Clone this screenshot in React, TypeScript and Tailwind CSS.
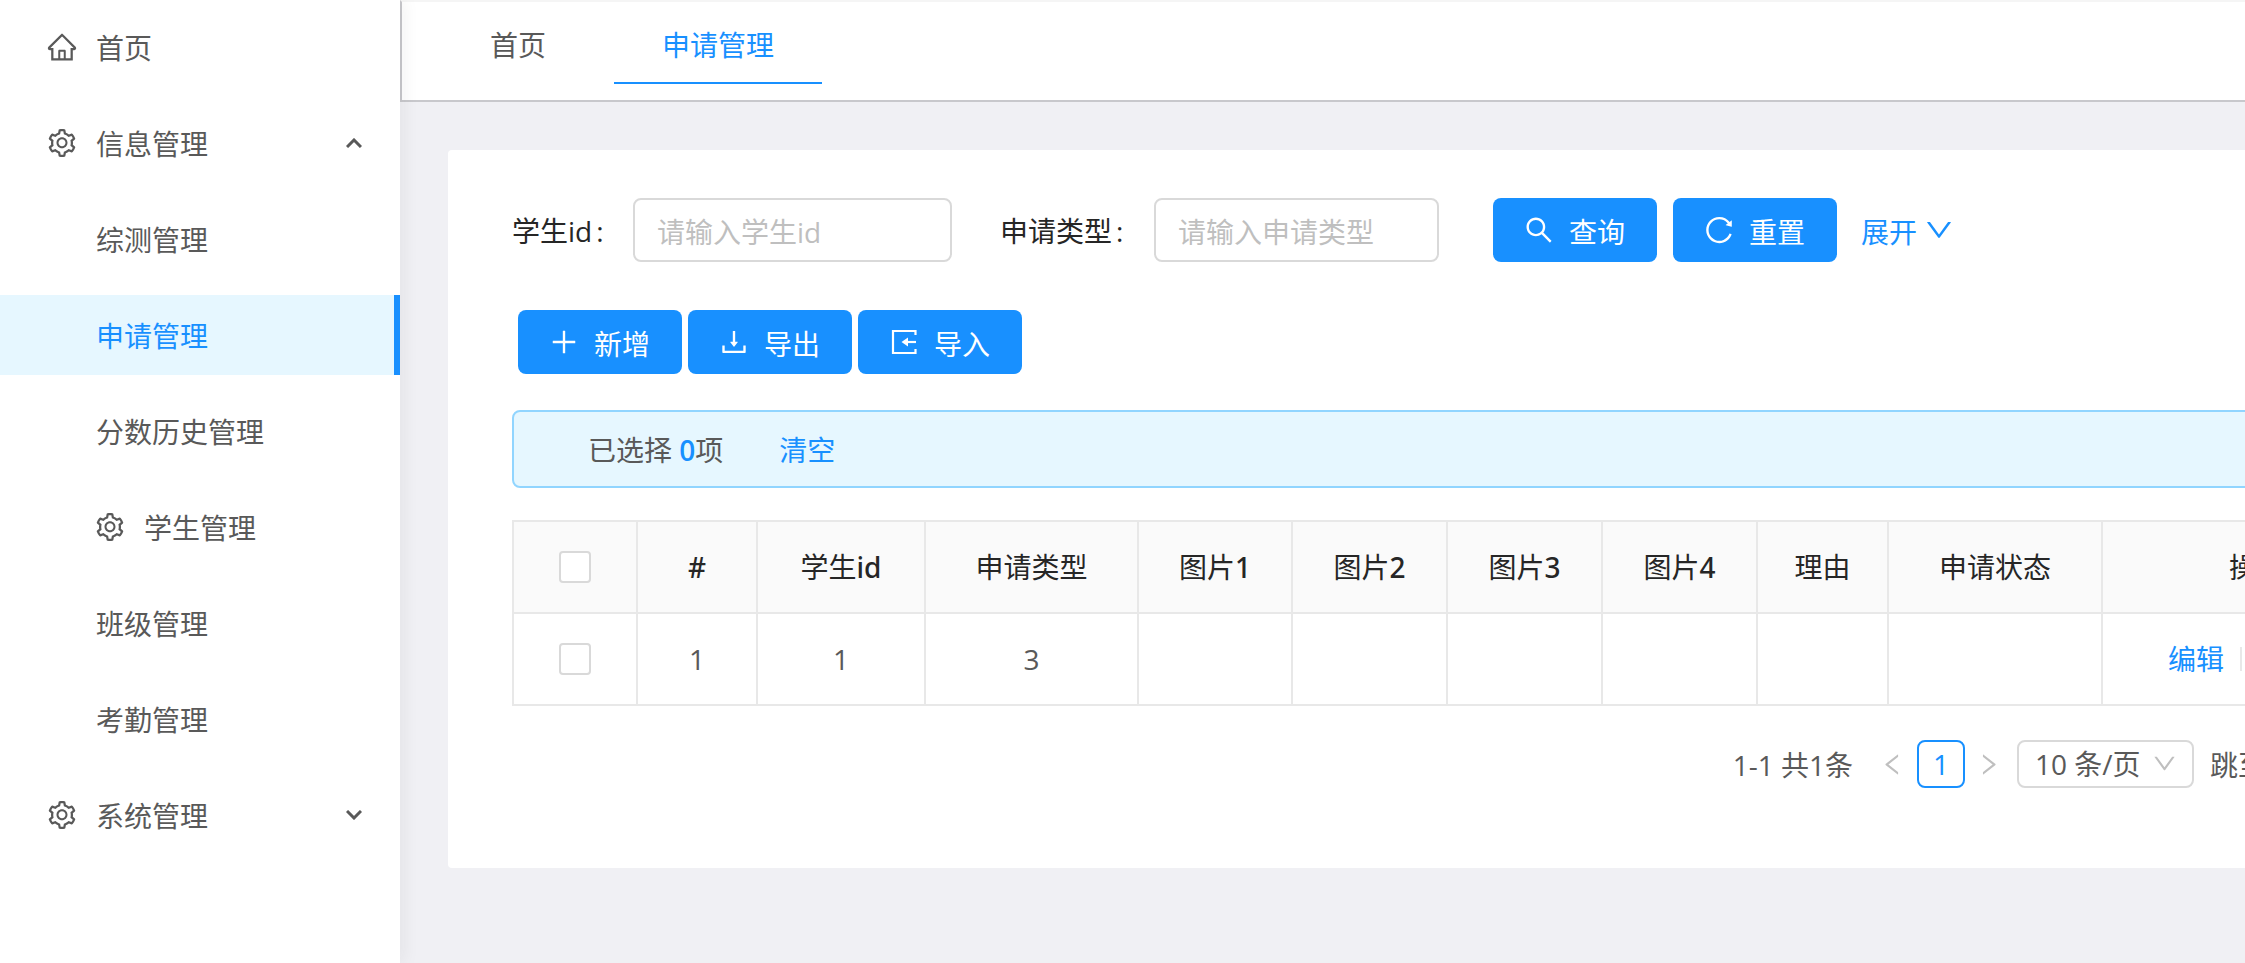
import React from 'react';
import {
  AiOutlineDown,
  AiOutlineDownload,
  AiOutlineHome,
  AiOutlineLeft,
  AiOutlinePlus,
  AiOutlineReload,
  AiOutlineRight,
  AiOutlineSearch,
  AiOutlineSetting,
} from 'react-icons/ai';

type MenuItem = {
  title: string;
  icon?: React.ReactNode;
  level: 1 | 2;
  active?: boolean;
  arrow?: 'up' | 'down';
};

const menuItems: MenuItem[] = [
  { title: '首页', icon: <AiOutlineHome size={32} className="-m-0.5" />, level: 1 },
  { title: '信息管理', icon: <AiOutlineSetting size={32} className="-m-0.5" />, level: 1, arrow: 'up' },
  { title: '综测管理', level: 2 },
  { title: '申请管理', level: 2, active: true },
  { title: '分数历史管理', level: 2 },
  { title: '学生管理', icon: <AiOutlineSetting size={32} className="-m-0.5" />, level: 2 },
  { title: '班级管理', level: 2 },
  { title: '考勤管理', level: 2 },
  { title: '系统管理', icon: <AiOutlineSetting size={32} className="-m-0.5" />, level: 1, arrow: 'down' },
];

const columns = [
  { title: '', suffix: '#', width: 'w-[120px]' },
  { title: '学生', suffix: 'id', width: 'w-[168px]' },
  { title: '申请类型', suffix: '', width: 'w-[213px]' },
  { title: '图片', suffix: '1', width: 'w-[154px]' },
  { title: '图片', suffix: '2', width: 'w-[155px]' },
  { title: '图片', suffix: '3', width: 'w-[155px]' },
  { title: '图片', suffix: '4', width: 'w-[155px]' },
  { title: '理由', suffix: '', width: 'w-[131px]' },
  { title: '申请状态', suffix: '', width: 'w-[214px]' },
  { title: '操作', suffix: '', width: 'w-[310px]' },
];

const rows = [['1', '1', '3', '', '', '', '', '', '']];

const MenuArrow = ({ dir }: { dir: 'up' | 'down' }) => (
  <svg width="16" height="10" viewBox="0 0 16 10" fill="none" stroke="currentColor" strokeWidth="3">
    <path d={dir === 'up' ? 'M1 9 8 2l7 7' : 'M1 1l7 7 7-7'} />
  </svg>
);

const ImportIcon = () => (
  <svg width="28" height="28" viewBox="0 0 28 28" fill="none" stroke="currentColor" strokeWidth="2.2">
    <path d="M25.5 7V3H3v22h22.500v-4" />
    <path d="M26 14H16" />
    <path d="M11.500 14l6.500-4.500v9z" fill="currentColor" stroke="none" />
  </svg>
);

const Sidebar = () => (
  <aside className="relative z-10 w-[400px] shrink-0 bg-white shadow-[4px_0_16px_rgba(29,35,41,0.06)]">
    <nav className="flex flex-col gap-4 pt-[7px]">
      {menuItems.map((item) => (
        <a
          key={item.title}
          href="#"
          className={`flex h-20 items-center gap-5 pr-[38px] ${item.level === 1 ? 'pl-12' : 'pl-24'} ${
            item.active ? 'border-r-[6px] border-[#1890ff] bg-[#e6f7ff] text-[#1890ff]' : ''
          }`}
        >
          {item.icon}
          <span className="flex-1 pt-0.5">{item.title}</span>
          {item.arrow && <MenuArrow dir={item.arrow} />}
        </a>
      ))}
    </nav>
  </aside>
);

const Tabs = () => (
  <header className="flex h-[102px] gap-5 border-t-2 border-b-2 border-l-2 border-t-[#f5f5f5] border-b-[#c8c8cc] border-l-[#c8c8cc] bg-white pl-10">
    <a href="#" className="flex h-[82px] items-center border-b-2 border-transparent px-12 pt-1.5">
      首页
    </a>
    <a href="#" className="flex h-[82px] items-center border-b-2 border-[#1890ff] px-12 pt-1.5 text-[#1890ff]">
      申请管理
    </a>
  </header>
);

const PrimaryButton = ({ icon, children }: { icon: React.ReactNode; children: React.ReactNode }) => (
  <button
    type="button"
    className="flex h-16 w-[164px] items-center justify-center gap-4 rounded-lg bg-[#1890ff] text-white"
  >
    {icon}
    <span className="pt-1">{children}</span>
  </button>
);

const inputClass =
  'h-16 rounded-lg border-2 border-[#d9d9d9] bg-white px-[22px] pt-1 outline-none placeholder:text-[#bfbfbf]';

const SearchForm = () => (
  <form className="flex items-center">
    <label htmlFor="studentId" className="w-[121px] pt-0.5 text-[#262626]">
      学生id<span className="ml-1">:</span>
    </label>
    <input id="studentId" type="text" placeholder="请输入学生id" className={`${inputClass} w-[319px]`} />
    <label htmlFor="applyType" className="ml-12 w-[154px] pt-0.5 text-[#262626]">
      申请类型<span className="ml-1">:</span>
    </label>
    <input id="applyType" type="text" placeholder="请输入申请类型" className={`${inputClass} w-[285px]`} />
    <div className="ml-[54px] flex items-center gap-4">
      <PrimaryButton icon={<AiOutlineSearch size={32} className="-m-0.5" />}>查询</PrimaryButton>
      <PrimaryButton icon={<AiOutlineReload size={32} className="-m-0.5" />}>重置</PrimaryButton>
    </div>
    <a href="#" className="ml-6 flex items-center gap-2 text-[#1890ff]">
      <span className="pt-1">展开</span>
      <AiOutlineDown size={32} className="-m-0.5" />
    </a>
  </form>
);

const Checkbox = ({ label }: { label: string }) => (
  <input
    type="checkbox"
    aria-label={label}
    className="mx-auto block size-8 appearance-none rounded border-2 border-[#d9d9d9] bg-white checked:bg-[#1890ff]"
  />
);

const cellClass = 'h-[92px] border-2 border-[#e8e8e8] p-0 text-center';

const DataTable = () => (
  <table className="mt-8 w-full table-fixed border-collapse">
    <thead className="bg-[#fafafa] text-[#262626]">
      <tr>
        <th className={`${cellClass} w-[124px]`}>
          <Checkbox label="全选" />
        </th>
        {columns.map((col) => (
          <th key={col.title + col.suffix} className={`${cellClass} ${col.width} font-normal`}>
            {col.title}
            {col.suffix && <span className="font-['Noto_Sans'] font-medium">{col.suffix}</span>}
          </th>
        ))}
      </tr>
    </thead>
    <tbody>
      {rows.map((row, i) => (
        <tr key={i}>
          <td className={cellClass}>
            <Checkbox label="选择" />
          </td>
          {row.map((value, j) => (
            <td key={j} className={cellClass}>
              {value}
            </td>
          ))}
          <td className={cellClass}>
            <div className="flex items-center justify-center text-[#1890ff]">
              <a href="#">编辑</a>
              <span className="mx-4 h-6 w-0.5 bg-[#e8e8e8]" />
              <a href="#" className="flex items-center gap-2">
                更多
                <AiOutlineDown size={24} />
              </a>
            </div>
          </td>
        </tr>
      ))}
    </tbody>
  </table>
);

const Pagination = () => (
  <div className="mt-[34px] flex h-12 items-center justify-end">
    <span className="pt-0.5">1-1 共1条</span>
    <button type="button" aria-label="上一页" className="ml-4 flex size-12 items-center justify-center text-[#bfbfbf]">
      <AiOutlineLeft size={27} />
    </button>
    <button
      type="button"
      className="flex size-12 items-center justify-center rounded-lg border-2 border-[#1890ff] bg-white text-[#1890ff]"
    >
      1
    </button>
    <button type="button" aria-label="下一页" className="flex size-12 items-center justify-center text-[#bfbfbf]">
      <AiOutlineRight size={27} />
    </button>
    <div className="relative ml-1">
      <select
        aria-label="每页条数"
        className="h-12 w-[177px] appearance-none rounded-lg border-2 border-[#d9d9d9] bg-white pl-4 outline-none"
      >
        <option>10 条/页</option>
        <option>20 条/页</option>
        <option>30 条/页</option>
      </select>
      <AiOutlineDown size={27} className="pointer-events-none absolute top-2.5 right-4 text-[#bfbfbf]" />
    </div>
    <label htmlFor="jumpTo" className="ml-4 pt-0.5">
      跳至
    </label>
    <input id="jumpTo" type="text" className="mx-4 h-12 w-[86px] rounded-lg border-2 border-[#d9d9d9] px-3" />
    <span className="pt-0.5">页</span>
  </div>
);

const App: React.FC = () => {
  return (
    <div className="flex min-h-screen overflow-hidden bg-[#f0f0f4] font-['Open_Sans','Noto_Sans_CJK_SC',sans-serif] text-[28px] leading-[42px] text-[#595959]">
      <Sidebar />
      <div className="min-w-[2076px] flex-1">
        <Tabs />
        <main className="mt-12 ml-12 rounded bg-white px-16 pt-12 pb-20">
          <SearchForm />
          <div className="mt-12 ml-1.5 flex gap-1.5">
            <PrimaryButton icon={<AiOutlinePlus size={32} className="-m-0.5" />}>新增</PrimaryButton>
            <PrimaryButton icon={<AiOutlineDownload size={32} className="-m-0.5" />}>导出</PrimaryButton>
            <PrimaryButton icon={<ImportIcon />}>导入</PrimaryButton>
          </div>
          <div className="mt-9 flex h-[78px] items-center rounded-lg border-2 border-[#91d5ff] bg-[#e6f7ff] pt-0.5 pl-[74px]">
            <span>
              已选择 <b className="font-semibold text-[#1890ff]">0</b>项
            </span>
            <a href="#" className="ml-14 text-[#1890ff]">
              清空
            </a>
          </div>
          <DataTable />
          <Pagination />
        </main>
      </div>
    </div>
  );
};

export default App;
